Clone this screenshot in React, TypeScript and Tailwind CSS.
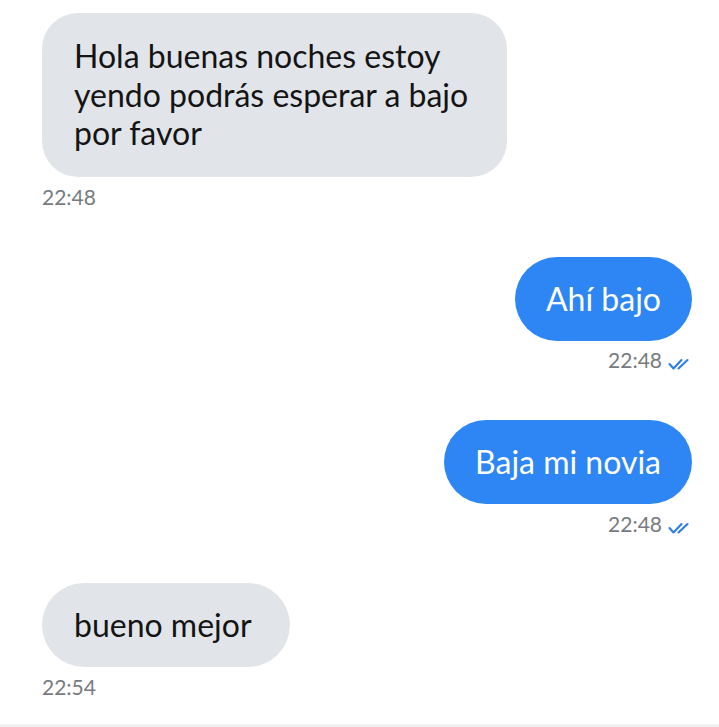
import React from "react";

const font = { fontFamily: "Lato, 'Noto Sans', sans-serif" };

function Ticks() {
  return (
    <svg width="24" height="12" viewBox="0 0 24 12" fill="none" className="ml-[6px] mt-[8px]">
      <path d="M1.5 6 L5.5 10.5 L13.5 2" stroke="#2f7de1" strokeWidth="2.1" strokeLinecap="round" strokeLinejoin="round" />
      <path d="M10.5 10.5 L19.5 2" stroke="#2f7de1" strokeWidth="2.1" strokeLinecap="round" />
    </svg>
  );
}

export default function App() {
  return (
    <div className="w-[719px] h-[727px] bg-white flex flex-col overflow-hidden" style={font}>
      <div className="flex-1 flex flex-col pl-[42px] pr-[27px] pt-[13px]">
        {/* message 1 */}
        <div className="flex flex-col items-start">
          <div className="w-[465px] bg-[#e1e5ea] rounded-[36px] pl-[32px] pr-[30px] pt-[24px] pb-[24px] text-[32px] leading-[38.5px] text-[#141414]">
            Hola buenas noches estoy yendo podrás esperar a bajo por favor
          </div>
          <div className="mt-[8px] text-[21px] leading-[24px] text-[#777b80]">22:48</div>
        </div>

        {/* message 2 */}
        <div className="flex flex-col items-end mt-[48px]">
          <div className="bg-[#2e86f5] rounded-full px-[31px] py-[23px] text-[32px] leading-[38px] text-white">
            Ahí bajo
          </div>
          <div className="mt-[7px] flex items-center text-[21px] leading-[24px] text-[#777b80]">
            <span>22:48</span>
            <Ticks />
          </div>
        </div>

        {/* message 3 */}
        <div className="flex flex-col items-end mt-[48px]">
          <div className="bg-[#2e86f5] rounded-full px-[31px] py-[23px] text-[32px] leading-[38px] text-white">
            Baja mi novia
          </div>
          <div className="mt-[8px] flex items-center text-[21px] leading-[24px] text-[#777b80]">
            <span>22:48</span>
            <Ticks />
          </div>
        </div>

        {/* message 4 */}
        <div className="flex flex-col items-start mt-[47px]">
          <div className="bg-[#e1e5ea] rounded-full pl-[32px] pr-[38px] py-[23px] text-[32px] leading-[38px] text-[#141414]">
            bueno mejor
          </div>
          <div className="mt-[8px] text-[21px] leading-[24px] text-[#777b80]">22:54</div>
        </div>
      </div>
      <div className="h-[3px] bg-[#f1f1f1]" />
    </div>
  );
}
